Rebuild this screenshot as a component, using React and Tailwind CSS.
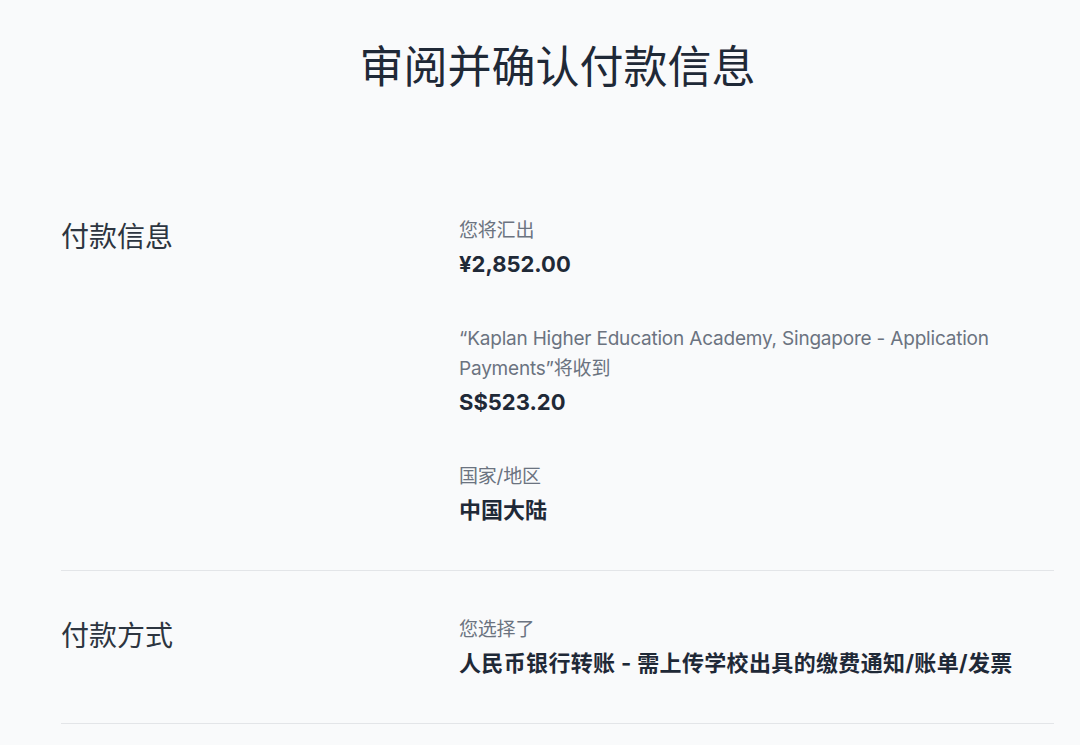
export default function App() {
  const font = { fontFamily: '"Inter", "Noto Sans CJK SC", sans-serif' };
  const Label = ({ children }) => (
    <div className="text-[19px] leading-[30px] tracking-[-0.2px] text-[#6b7380]">{children}</div>
  );
  const Value = ({ children, wide }) => (
    <div
      className={
        wide
          ? "mt-[3px] text-[22px] leading-[30px] font-bold tracking-[0.35px] text-[#1f2937]"
          : "mt-[3px] text-[22px] leading-[30px] font-bold text-[#1f2937]"
      }
    >
      {children}
    </div>
  );
  return (
    <div className="min-h-[745px] w-[1080px] bg-[#f9fafb] overflow-hidden" style={font}>
      <h1 className="pt-[39px] pl-[35px] text-center text-[44px] leading-[56px] font-normal text-[#1f2937]">
        审阅并确认付款信息
      </h1>
      <div className="ml-[61px] mr-[26px] mt-[77px]">
        <section className="flex pt-[44px] pb-[45px] border-b border-[#e3e5e8]">
          <div className="w-[398px] shrink-0 pt-[1px] text-[28px] leading-[40px] text-[#2d3540]">付款信息</div>
          <div className="flex flex-col gap-[45px]">
            <div>
              <Label>您将汇出</Label>
              <Value>¥2,852.00</Value>
            </div>
            <div>
              <Label>
                “Kaplan Higher Education Academy, Singapore - Application
                <br />
                Payments”将收到
              </Label>
              <Value>S$523.20</Value>
            </div>
            <div>
              <Label>国家/地区</Label>
              <Value>中国大陆</Value>
            </div>
          </div>
        </section>
        <section className="flex pt-[44px] pb-[45px] border-b border-[#e3e5e8]">
          <div className="w-[398px] shrink-0 pt-[1px] text-[28px] leading-[40px] text-[#2d3540]">付款方式</div>
          <div>
            <Label>您选择了</Label>
            <Value wide>人民币银行转账 - 需上传学校出具的缴费通知/账单/发票</Value>
          </div>
        </section>
      </div>
    </div>
  );
}
